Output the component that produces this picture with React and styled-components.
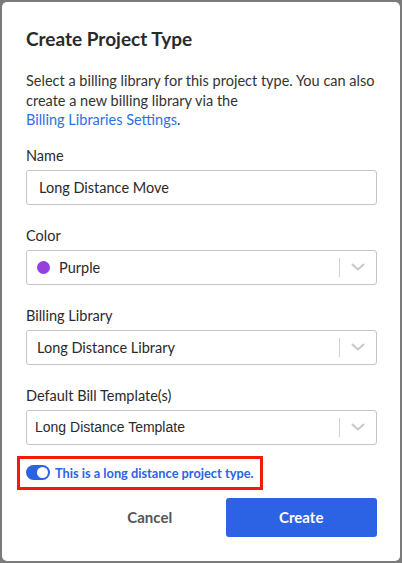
import React from 'react';
import styled, { createGlobalStyle } from 'styled-components';

const GlobalStyle = createGlobalStyle`
  html, body {
    margin: 0;
    padding: 0;
    background: #7b7b7b;
  }
  body {
    font-family: Lato, "Open Sans", sans-serif;
  }
`;

const Backdrop = styled.div`
  width: 402px;
  height: 563px;
  padding: 2px;
  box-sizing: border-box;
  background: #7b7b7b;
`;

const Modal = styled.div`
  background: #fff;
  border-radius: 5px;
  height: 559px;
  box-sizing: border-box;
  padding: 25px 23px 0 24px;
  display: flex;
  flex-direction: column;
`;

const Title = styled.h2`
  margin: 0;
  font-size: 19px;
  font-weight: 700;
  color: #2a2a2a;
  line-height: 24px;
`;

const Description = styled.p`
  margin: 20px 0 0;
  font-size: 14.5px;
  line-height: 19.5px;
  color: #333;
`;

const Link = styled.a`
  color: #2f6fe6;
  text-decoration: none;
  white-space: nowrap;
`;

const Field = styled.div`
  display: flex;
  flex-direction: column;
  margin-top: ${(p) => p.$top || 16}px;
`;

const Label = styled.label`
  font-size: 14.5px;
  line-height: 18px;
  color: #2a2a2a;
  margin-bottom: 5px;
`;

const Input = styled.input`
  height: 35px;
  box-sizing: border-box;
  border: 1px solid #c4c4c4;
  border-radius: 3px;
  padding: 0 12px;
  font-family: inherit;
  font-size: 14.5px;
  color: #2a2a2a;
  outline: none;
`;

const Select = styled.div`
  height: 35px;
  box-sizing: border-box;
  border: 1px solid #c4c4c4;
  border-radius: 3px;
  display: flex;
  align-items: center;
  padding-left: ${(p) => p.$pad || 10}px;
`;

const Value = styled.span`
  flex: 1;
  display: flex;
  align-items: center;
  gap: 9px;
  color: #2a2a2a;
  font-family: ${(p) => (p.$plain ? '"Liberation Sans", Arial, sans-serif' : 'inherit')};
  font-size: ${(p) => (p.$plain ? 14 : 14.5)}px;
`;

const Dot = styled.span`
  width: 13px;
  height: 13px;
  border-radius: 50%;
  background: ${(p) => p.$color};
`;

const Divider = styled.span`
  width: 1px;
  height: 19px;
  background: #d0d0d0;
`;

const Chevron = styled.span`
  width: 36px;
  display: flex;
  justify-content: center;
  color: #c8c8c8;
`;

const ToggleRow = styled.div`
  margin: 11px 0 0 -9px;
  align-self: flex-start;
  border: 3px solid #f21a0b;
  padding: 6px;
  display: flex;
  align-items: center;
  gap: 5px;
`;

const Toggle = styled.span`
  width: 24px;
  height: 15px;
  border-radius: 8px;
  background: #2c63e5;
  display: flex;
  align-items: center;
  justify-content: flex-end;
  padding: 0 2px;
  box-sizing: border-box;
`;

const Knob = styled.span`
  width: 11px;
  height: 11px;
  border-radius: 50%;
  background: #fff;
`;

const ToggleText = styled.span`
  font-size: 12.8px;
  font-weight: 700;
  color: #2c63e5;
`;

const Actions = styled.div`
  margin-top: 8px;
  display: grid;
  grid-template-columns: 1fr 1fr;
  padding-left: 48px;
`;

const Button = styled.button`
  height: 39px;
  border: none;
  border-radius: 3px;
  font-family: inherit;
  font-size: 15px;
  font-weight: 700;
  background: ${(p) => (p.$primary ? '#2c63e5' : 'transparent')};
  color: ${(p) => (p.$primary ? '#fff' : '#555')};
`;

const ChevronIcon = () => (
  <svg width="14" height="8" viewBox="0 0 14 8" fill="none">
    <path d="M1.5 1.5 L7 6.5 L12.5 1.5" stroke="currentColor" strokeWidth="2" strokeLinecap="round" />
  </svg>
);

const SelectBox = ({ children, pad }) => (
  <Select $pad={pad}>
    {children}
    <Divider />
    <Chevron>
      <ChevronIcon />
    </Chevron>
  </Select>
);

const App = () => {
  return (
    <>
      <GlobalStyle />
      <Backdrop>
        <Modal>
          <Title>Create Project Type</Title>
          <Description>
            Select a billing library for this project type. You can also create a new billing library via the{' '}
            <Link>Billing Libraries Settings</Link>.
          </Description>
          <Field $top={17}>
            <Label>Name</Label>
            <Input defaultValue="Long Distance Move" />
          </Field>
          <Field $top={22}>
            <Label>Color</Label>
            <SelectBox>
              <Value>
                <Dot $color="#9340dc" />
                Purple
              </Value>
            </SelectBox>
          </Field>
          <Field $top={22}>
            <Label>Billing Library</Label>
            <SelectBox>
              <Value>Long Distance Library</Value>
            </SelectBox>
          </Field>
          <Field $top={22}>
            <Label>Default Bill Template(s)</Label>
            <SelectBox pad={8}>
              <Value $plain>Long Distance Template</Value>
            </SelectBox>
          </Field>
          <ToggleRow>
            <Toggle>
              <Knob />
            </Toggle>
            <ToggleText>This is a long distance project type.</ToggleText>
          </ToggleRow>
          <Actions>
            <Button>Cancel</Button>
            <Button $primary>Create</Button>
          </Actions>
        </Modal>
      </Backdrop>
    </>
  );
};

export default App;
